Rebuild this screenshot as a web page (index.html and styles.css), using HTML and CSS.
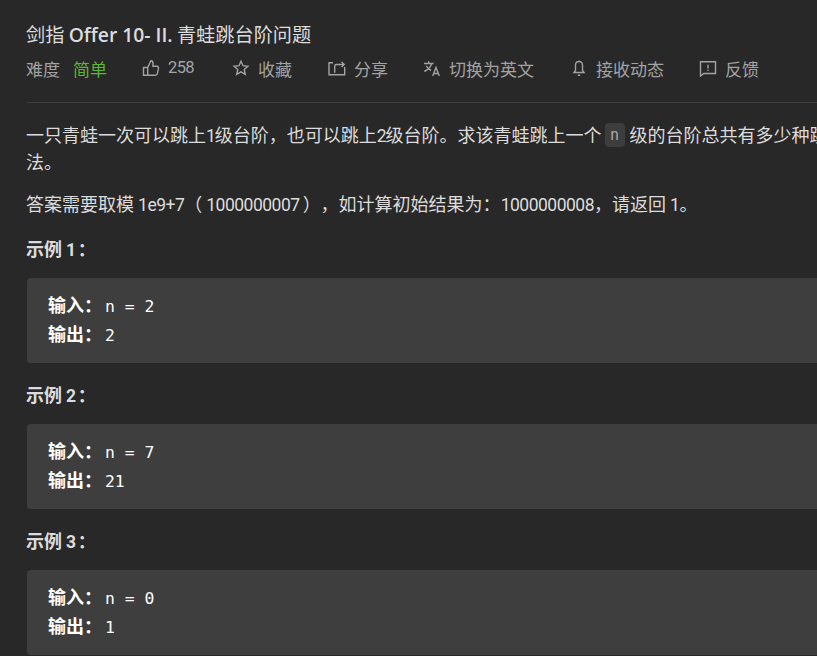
FILE: index.html
```html
<!DOCTYPE html>
<html lang="zh-CN">
<head>
<meta charset="utf-8">
<title>剑指 Offer 10- II. 青蛙跳台阶问题</title>
<link rel="stylesheet" href="styles.css">
</head>
<body>
<main class="page">
  <h1 class="title">剑指 <span class="latin-title">Offer 10- II.</span> 青蛙跳台阶问题</h1>
  <div class="meta">
    <span class="label">难度</span><span class="easy">简单</span>
    <span class="action act-like"><svg class="icon" viewBox="0 0 18 18"><path d="M5.700 8.500v7.700H1.500V8.500zM5.700 8.500l3.200-6.700c1.300 0 2.100 1 2.100 2.200V7.300h4c1 0 1.700.9 1.500 1.800l-1.200 5.800c-.2.800-.9 1.300-1.700 1.300H5.700"/></svg><span class="latin count">258</span></span>
    <span class="action act-star"><svg class="icon" viewBox="0 0 18 18"><path d="M9 2.200l2 4.500 4.900.5-3.700 3.300 1.100 4.800L9 12.800l-4.300 2.500 1.100-4.800L2.100 7.200 7 6.700z"/></svg>收藏</span>
    <span class="action act-share"><svg class="icon" viewBox="0 0 18 18"><path d="M5 3.700H1v12h15.700V8M6.700 13.700V7.200c0-1 .7-1.700 1.700-1.700H16M13.600 3l2.500 2.500L13.600 8"/></svg>分享</span>
    <span class="action act-lang"><svg class="icon" viewBox="0 0 18 18"><path d="M1 4.500h9.500M5.700 2.300v2.200M8.700 4.500C7.700 8 5 10.800 1.300 12.500M3.200 6.800c1.100 2.100 2.800 3.700 4.900 4.700M9.700 17l3.300-8.500 3.300 8.500M10.800 14.500h4.400"/></svg>切换为英文</span>
    <span class="action act-bell"><svg class="icon" viewBox="0 0 18 18"><path d="M9 2.500c-2.200 0-3.500 1.700-3.500 4v5L4 13.500h10l-1.500-2v-5C12.500 4.200 11.200 2.500 9 2.500zM9 1.500v1M7.800 16.300h2.400"/></svg>接收动态</span>
    <span class="action act-flag"><svg class="icon" viewBox="0 0 18 18"><path d="M1.500 2.700h15v11.800H4.800L1.500 17zM9 5.800v3.800M9 10.800v1.300"/></svg>反馈</span>
  </div>
  <hr class="rule">
  <div class="body">
    <p class="para">一只青蛙一次可以跳上<span class="latin digit">1</span>级台阶，也可以跳上<span class="latin digit">2</span>级台阶。求该青蛙跳上一个 <code class="inline">n</code> 级的台阶总共有多少种跳法。</p>
    <p class="para">答案需要取模 <span class="latin">1e9+7</span>（<span class="latin big-number">1000000007</span>），如计算初始结果为：<span class="latin">1000000008</span>，请返回 <span class="latin">1</span>。</p>
    <p class="example"><strong>示例 <span class="latin">1</span>：</strong></p>
    <pre class="code"><strong class="code-label">输入：</strong>n = 2
<strong class="code-label">输出：</strong>2</pre>
    <p class="example"><strong>示例 <span class="latin">2</span>：</strong></p>
    <pre class="code"><strong class="code-label">输入：</strong>n = 7
<strong class="code-label">输出：</strong>21</pre>
    <p class="example"><strong>示例 <span class="latin">3</span>：</strong></p>
    <pre class="code"><strong class="code-label">输入：</strong>n = 0
<strong class="code-label">输出：</strong>1</pre>
  </div>
</main>
</body>
</html>
```
FILE: styles.css
```css
* { box-sizing: border-box; }
html, body { margin: 0; height: 100%; background: #282828; overflow: hidden; }
.page {
  width: 829px;
  padding: 20px 0 0 26px;
  font-family: "Noto Sans CJK SC", "Open Sans", sans-serif;
  color: #dcdcdc;
  text-spacing-trim: space-all;
}
.title { margin: 0; font-size: 19.200px; font-weight: 400; line-height: 28px; color: #dcdcdc; }
.latin-title { font-family: "Open Sans", sans-serif; font-size: 19.300px; font-weight: 600; line-height: 1; }
.latin { font-family: Roboto, sans-serif; font-size: 17.500px; letter-spacing: -0.500px; line-height: 1; }
.digit { letter-spacing: -1.100px; }
.big-number { margin: 0 3px 0 4px; }
.count { font-size: 16.500px; letter-spacing: -0.600px; }
.meta { display: flex; align-items: center; height: 24px; margin-top: 8px; font-size: 17px; color: #a3a3a3; }
.label { width: 47px; }
.easy { color: #5cb82e; width: 69px; }
.action { display: flex; align-items: center; gap: 8px; }
.icon { width: 18px; height: 18px; fill: none; stroke: #a3a3a3; stroke-width: 1.400; flex: none; }
.act-like { width: 90px; }
.act-star { width: 96px; }
.act-share { width: 95px; }
.act-lang { width: 147px; }
.act-bell { width: 129px; }
.rule { border: 0; border-top: 1px solid #3e3e3e; margin: 22px 0 0 1px; }
.body { font-size: 18px; line-height: 27px; color: #dcdcdc; }
.para { margin: 0 0 15px; }
.body .para:first-child { margin-top: 18px; }
.inline {
  font-family: "DejaVu Sans Mono", monospace;
  font-size: 15px;
  line-height: 1;
  vertical-align: 2px;
  background: #3d3d3d;
  color: #a8a8a8;
  padding: 3px 5.500px;
  margin: 0 1px 0 -1px;
  border-radius: 4px;
}
.example { margin: 18px 0 16px; }
.example .latin { font-weight: 700; margin-right: 2px; }
.code {
  margin: 0 0 0 1px;
  padding: 13.500px 21px;
  height: 85px;
  background: #3e3e3e;
  border-radius: 4px;
  font-family: "DejaVu Sans Mono", monospace;
  font-size: 16.400px;
  line-height: 29px;
  color: #fff;
}
.code-label { font-family: "Noto Sans CJK SC", sans-serif; font-size: 18px; line-height: 1; margin-right: 3px; }
```
